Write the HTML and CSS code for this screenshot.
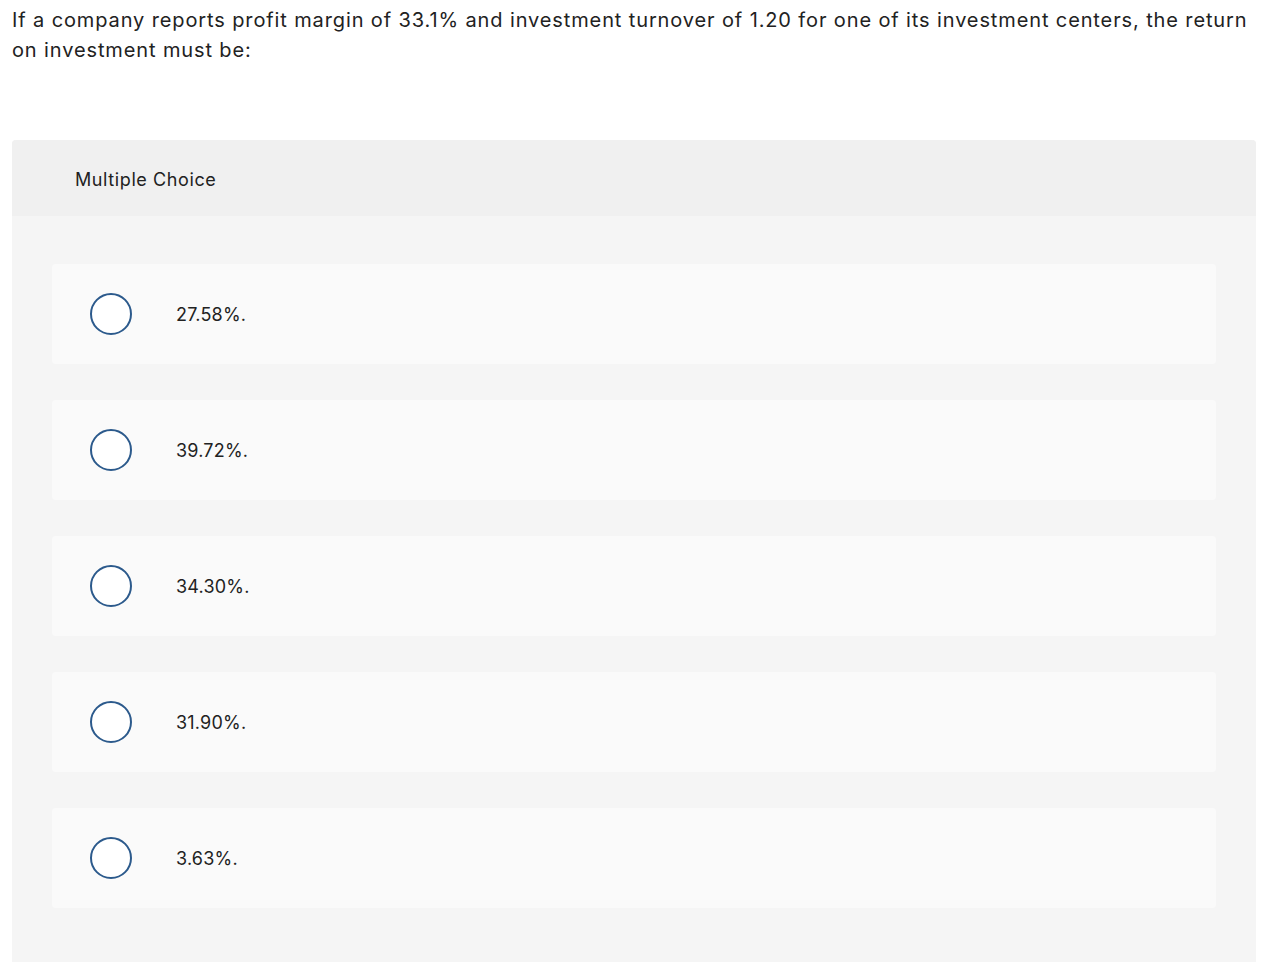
FILE: index.html
```html
<!DOCTYPE html>
<html>
<head>
<meta charset="utf-8">
<link rel="stylesheet" href="styles.css">
</head>
<body>
<div class="page">
  <p class="question">If a company reports profit margin of 33.1% and investment turnover of 1.20 for one of its investment centers, the return on investment must be:</p>
  <div class="mc">
    <div class="mc-head">Multiple Choice</div>
    <div class="mc-body">
      <div class="opt"><span class="radio"></span><span class="label">27.58%.</span></div>
      <div class="opt"><span class="radio"></span><span class="label">39.72%.</span></div>
      <div class="opt"><span class="radio"></span><span class="label">34.30%.</span></div>
      <div class="opt"><span class="radio"></span><span class="label">31.90%.</span></div>
      <div class="opt"><span class="radio"></span><span class="label">3.63%.</span></div>
    </div>
  </div>
</div>
</body>
</html>
```
FILE: styles.css
```css
html, body {
  margin: 0;
  padding: 0;
  background: #ffffff;
}
body {
  font-family: Inter, "Open Sans", "Liberation Sans", sans-serif;
  color: #222222;
}
.page {
  padding: 5px 30px 0 12px;
}
.question {
  margin: 0;
  font-size: 20px;
  line-height: 30px;
  letter-spacing: 0.88px;
  color: #222222;
}
.mc {
  margin-top: 75px;
  background: #f5f5f5;
  border-radius: 4px 4px 0 0;
}
.mc-head {
  background: #f0f0f0;
  height: 76px;
  box-sizing: border-box;
  padding-left: 63px;
  display: flex;
  align-items: center;
  font-size: 18px;
  letter-spacing: 0.6px;
  padding-top: 2px;
  border-radius: 4px 4px 0 0;
}
.mc-body {
  padding: 48px 40px 60px 40px;
  display: flex;
  flex-direction: column;
  gap: 36px;
}
.opt {
  height: 100px;
  background: #fafafa;
  border-radius: 4px;
  display: flex;
  align-items: center;
  padding-left: 38px;
}
.radio {
  width: 42px;
  height: 42px;
  box-sizing: border-box;
  border: 2px solid #2c5a8c;
  border-radius: 50%;
  background: #ffffff;
  flex: none;
}
.label {
  margin-left: 44px;
  font-size: 18px;
  letter-spacing: 0.2px;
}
```
